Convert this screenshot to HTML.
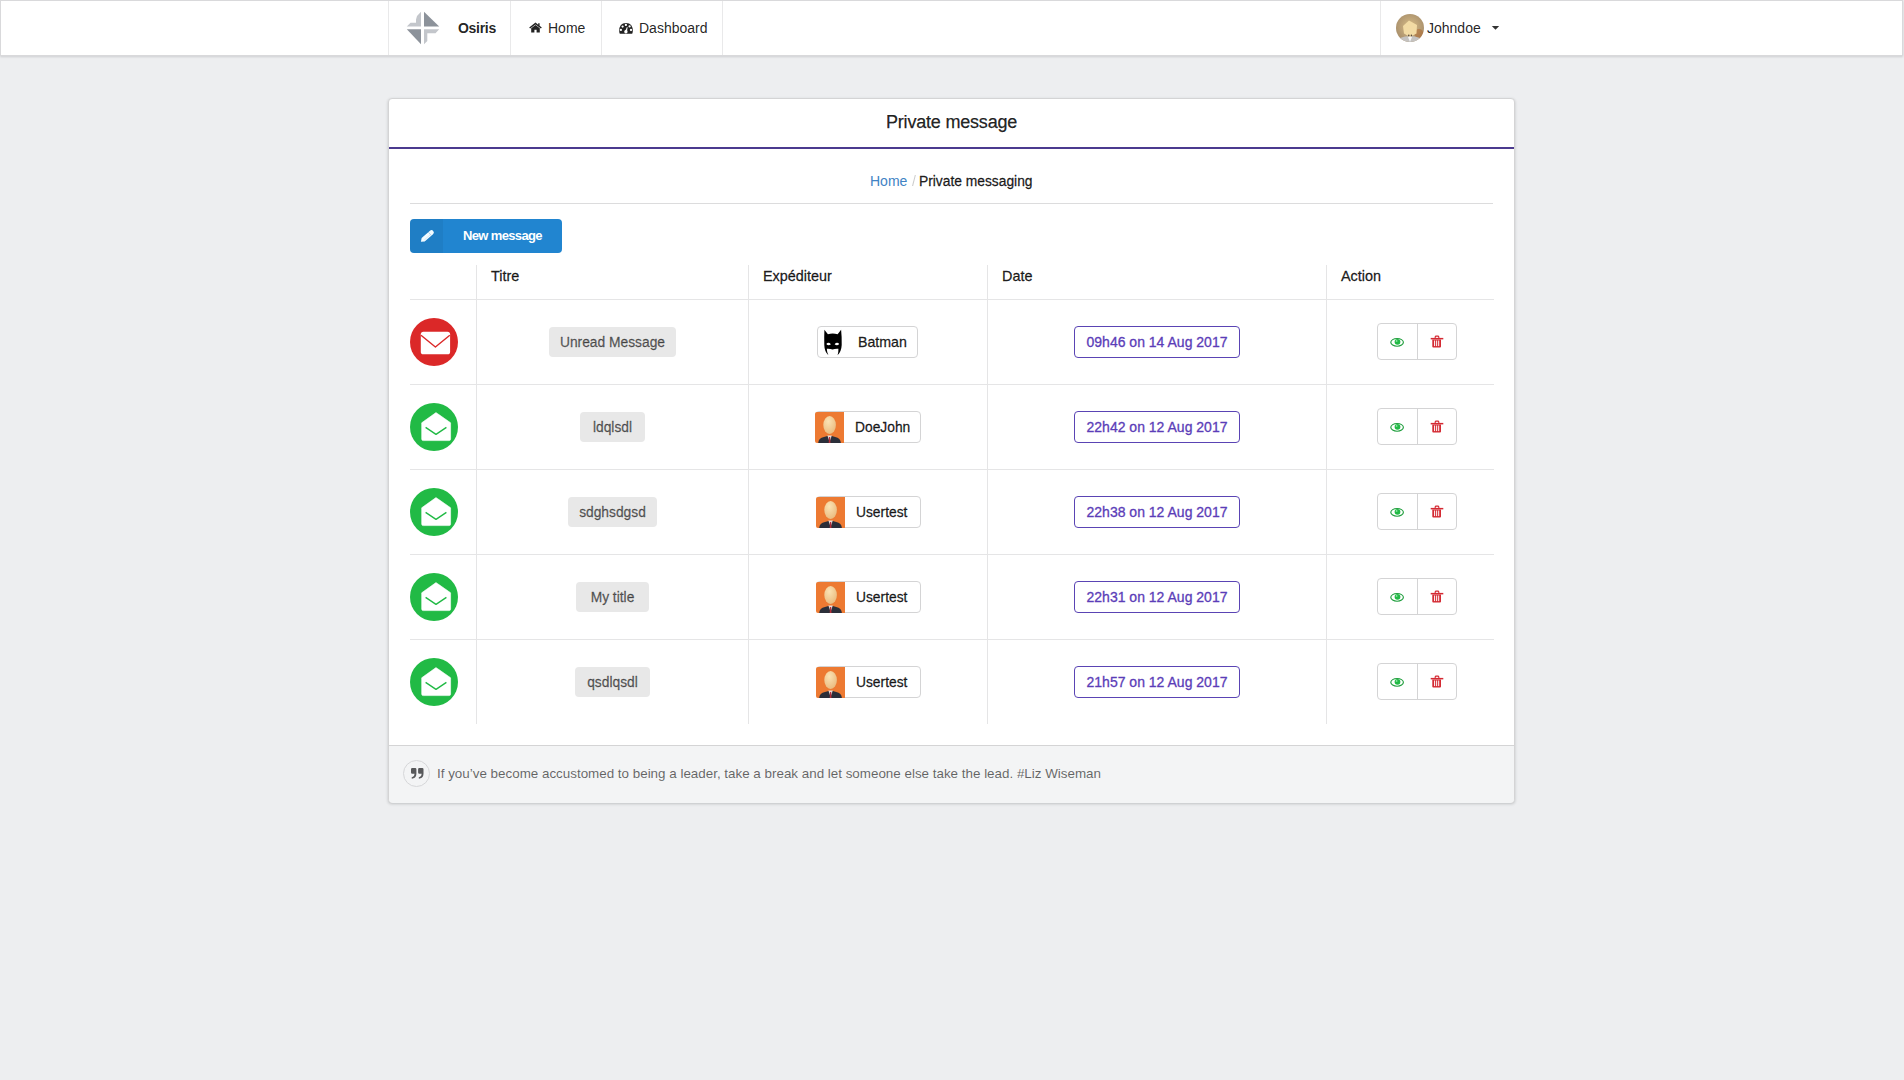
<!DOCTYPE html>
<html>
<head>
<meta charset="utf-8">
<style>
html,body{margin:0;padding:0;}
body{width:1904px;height:1080px;background:#edeef0;font-family:"Liberation Sans",sans-serif;color:rgba(0,0,0,.87);position:relative;overflow:hidden;}
.a{position:absolute;}
.sb{font-weight:normal !important;-webkit-text-stroke:0.3px currentColor;}
.t{position:absolute;white-space:nowrap;line-height:1;}
.nav{position:absolute;left:0;top:0;width:1903px;height:56px;box-sizing:border-box;background:#fff;border:1px solid #d9d9db;box-shadow:0 1px 2px rgba(34,36,38,.15);}
.vd{position:absolute;top:1px;width:1px;height:54px;background:#e9e9ea;}
.card{position:absolute;left:388px;top:98px;width:1127px;height:705px;box-sizing:border-box;background:#fff;border:1px solid #d4d4d5;border-radius:4px;box-shadow:0 1px 3px rgba(34,36,38,.22);overflow:hidden;}
.hl{position:absolute;height:1px;background:#e5e5e6;}
.vl{position:absolute;width:1px;background:#e5e5e6;}
.circ{position:absolute;width:48px;height:48px;border-radius:50%;}
.lbl{position:absolute;height:30px;background:#e8e8e8;border-radius:4px;color:rgba(0,0,0,.6);-webkit-text-stroke:0.3px currentColor;font-size:13.8px;line-height:32px;text-align:center;}
.slbl{position:absolute;height:32px;box-sizing:border-box;border:1px solid #d4d4d5;border-radius:4px;background:#fff;-webkit-text-stroke:0.3px currentColor;font-size:13.8px;line-height:30px;color:rgba(0,0,0,.87);}
.dlbl{position:absolute;left:1074px;width:166px;height:32px;box-sizing:border-box;border:1px solid #5a44b4;border-radius:4px;background:#fff;-webkit-text-stroke:0.3px currentColor;font-size:14px;line-height:30px;color:#5b3db8;text-align:center;}
.acts{position:absolute;left:1377px;width:80px;height:37px;box-sizing:border-box;border:1px solid #d4d4d5;border-radius:4px;background:#fff;}
</style>
</head>
<body>
<!-- NAVBAR -->
<div class="nav"></div>
<div class="vd" style="left:388px"></div>
<div class="vd" style="left:510px"></div>
<div class="vd" style="left:601px"></div>
<div class="vd" style="left:722px"></div>
<div class="vd" style="left:1380px"></div>

<svg class="a" style="left:406px;top:11px" width="34" height="34" viewBox="0 0 34 34">
<polygon points="18,0.7 18,15.5 33.2,15.5" fill="#8c929a"/>
<polygon points="0.8,18.3 15,18.3 15,33.2" fill="#8c929a"/>
<polygon points="15,0.8 15,15.5 0.8,15.5 4.5,11.8 10,11.8 10,8.5 11,5" fill="#c3c6cb"/>
<polygon points="18,18.3 33.2,18.3 29.5,22.3 21.3,22.3 21.3,30 18,33.2" fill="#c3c6cb"/>
</svg>
<div class="t" style="left:458px;top:21px;font-size:14px;font-weight:bold;letter-spacing:-0.3px">Osiris</div>
<svg class="a" style="left:529px;top:22px" width="13" height="11" viewBox="0 0 13 11">
<path d="M6.5 0.6 L0.2 5.6 L1.1 6.6 L6.5 2.4 L11.9 6.6 L12.8 5.6 L10.6 3.8 V1.2 H9.2 V2.7 Z" fill="#222"/>
<path d="M2.2 6.3 L6.5 2.9 L10.8 6.3 V10.6 H7.6 V7.8 H5.4 V10.6 H2.2 Z" fill="#222"/>
</svg>
<div class="t" style="left:548px;top:21px;font-size:14px">Home</div>
<svg class="a" style="left:619px;top:22px" width="15" height="12" viewBox="0 0 15 12"><path d="M0.2 9 Q0.2 0.9 7 0.9 Q13.8 0.9 13.8 9 Q13.8 10.6 13.2 11.8 H0.8 Q0.2 10.6 0.2 9 Z" fill="#222"/><circle cx="6.9" cy="2.9" r="1.15" fill="#fff"/><circle cx="3.6" cy="4.6" r="1.15" fill="#fff"/><circle cx="10.6" cy="4.4" r="1.15" fill="#fff"/><circle cx="1.9" cy="7.9" r="1.15" fill="#fff"/><circle cx="12" cy="8" r="1.15" fill="#fff"/><circle cx="6.9" cy="9.7" r="1.7" fill="#fff"/><path d="M6.0 9.4 L7.9 5.0 L8.6 5.2 L7.9 9.9 Z" fill="#fff"/></svg>
<div class="t" style="left:639px;top:21px;font-size:14px">Dashboard</div>
<svg class="a" style="left:1396px;top:14px" width="28" height="28" viewBox="0 0 28 28"><defs><clipPath id="avc"><circle cx="14" cy="14" r="14"/></clipPath><radialGradient id="avg" cx="0.5" cy="0.45" r="0.6"><stop offset="0" stop-color="#d8bd86"/><stop offset="1" stop-color="#a48b6a"/></radialGradient><filter id="avb" x="-20%" y="-20%" width="140%" height="140%"><feGaussianBlur stdDeviation="0.6"/></filter></defs><g clip-path="url(#avc)"><rect width="28" height="28" fill="url(#avg)"/><ellipse cx="23" cy="20" rx="4.5" ry="5" fill="#b06a33" opacity=".55" filter="url(#avb)"/><path d="M4 24 Q14 20 24 24 V28 H4 Z" fill="#c4c2c0" filter="url(#avb)"/><path d="M12 23 L14 28 L16 23 Z" fill="#f4f4f4"/><path d="M7 12 L13 6.5 L21 11 L20.5 19.5 L14 23 L8 19.5 Z" fill="#f2dba4" filter="url(#avb)"/><circle cx="12.8" cy="21.4" r="0.8" fill="#5a4a3a"/><circle cx="15.4" cy="21.4" r="0.8" fill="#5a4a3a"/></g></svg>
<div class="t" style="left:1427px;top:21px;font-size:14px">Johndoe</div>
<svg class="a" style="left:1491px;top:25px" width="9" height="6" viewBox="0 0 9 6"><polygon points="0.8,1 8.2,1 4.5,4.8" fill="#333"/></svg>

<!-- CARD -->
<div class="card"></div>
<div class="t" style="left:886px;top:113px;font-size:18px;letter-spacing:-0.2px;-webkit-text-stroke:0.25px currentColor">Private message</div>
<div class="a" style="left:389px;top:147px;width:1125px;height:2px;background:#4b3a8f"></div>
<div class="t" style="left:870px;top:173.5px;font-size:14px;color:#4183c4">Home</div>
<div class="t" style="left:912px;top:173.5px;font-size:14px;color:rgba(0,0,0,.4);opacity:.5">/</div>
<div class="t" style="left:919px;top:174.5px;font-size:13.8px;-webkit-text-stroke:0.3px currentColor">Private messaging</div>
<div class="hl" style="left:410px;top:203px;width:1083px;background:#dcdcdd"></div>
<!-- button -->
<div class="a" style="left:410px;top:219px;width:152px;height:34px;border-radius:4px;background:#2185d0;overflow:hidden">
<div class="a" style="left:0;top:0;width:33px;height:34px;background:rgba(0,0,0,.05)"></div>
<svg class="a" style="left:9px;top:10px" width="16" height="15" viewBox="0 0 16 15"><path d="M1.9 12.7 L5.68 12.45 L14.02 5.13 A2.3 2.3 0 0 0 10.98 1.67 L2.64 8.99 Z" fill="#f2fbff"/><path d="M12.37 6.58 L9.33 3.12" stroke="#2185d0" stroke-width="0.5" opacity=".6"/><path d="M5.3 10.9 L11.6 5.4" stroke="#9cc8ea" stroke-width="0.5" opacity=".7"/></svg>
</div>
<div class="t" style="left:463px;top:229px;font-size:13px;font-weight:bold;letter-spacing:-0.65px;color:#fff">New message</div>
<div class="t" style="left:491px;top:269px;font-size:14.4px;-webkit-text-stroke:0.3px currentColor">Titre</div>
<div class="t" style="left:763px;top:269px;font-size:14.4px;-webkit-text-stroke:0.3px currentColor">Expéditeur</div>
<div class="t" style="left:1002px;top:269px;font-size:14.4px;-webkit-text-stroke:0.3px currentColor">Date</div>
<div class="t" style="left:1341px;top:269px;font-size:14.4px;-webkit-text-stroke:0.3px currentColor">Action</div>
<div class="vl" style="left:476px;top:265px;height:459px"></div>
<div class="vl" style="left:748px;top:265px;height:459px"></div>
<div class="vl" style="left:987px;top:265px;height:459px"></div>
<div class="vl" style="left:1326px;top:265px;height:459px"></div>
<div class="hl" style="left:410px;top:299px;width:1084px"></div>
<div class="hl" style="left:410px;top:384px;width:1084px"></div>
<div class="hl" style="left:410px;top:469px;width:1084px"></div>
<div class="hl" style="left:410px;top:554px;width:1084px"></div>
<div class="hl" style="left:410px;top:639px;width:1084px"></div>
<svg class="a" style="left:410px;top:318px" width="48" height="48" viewBox="0 0 48 48"><circle cx="24" cy="24" r="24" fill="#db2828"/><rect x="10.8" y="13.7" width="29.3" height="22.6" rx="2.6" fill="#fff"/><path d="M11 17.2 L25.4 29 L39.8 17.2" stroke="#db2828" stroke-width="1.4" fill="none" stroke-linejoin="round"/></svg>
<div class="lbl" style="left:549px;top:327px;width:127px">Unread Message</div>
<div class="slbl" style="left:817px;top:326px;width:101px"><svg class="a" style="left:6px;top:2px" width="18" height="28" viewBox="0 0 18 28"><path d="M0.4 0.8 L3.9 5.2 Q8.6 3.6 13.6 5.2 L17.1 0.8 Q17.9 8 17.7 16 Q17.4 22.5 13.6 26.3 Q14.6 22 14.4 19.7 Q11 19.4 8.6 20.6 Q6.2 19.4 2.8 19.7 Q2.8 22.5 4.4 26.3 Q0.4 22.5 0.3 16 Q0.1 8 0.4 0.8 Z" fill="#000"/><path d="M2.3 15.0 Q4.4 12.4 6.9 15.2 Q4.4 17.6 2.3 15.0 Z M15.2 15.0 Q13.1 12.4 10.6 15.2 Q13.1 17.6 15.2 15.0 Z" fill="#fff"/></svg><span class="a" style="left:40px;top:0px;font-size:14.2px">Batman</span></div>
<div class="dlbl" style="top:326px">09h46 on 14 Aug 2017</div>
<div class="acts" style="top:323px"><div class="a" style="left:39px;top:0;width:1px;height:35px;background:#d4d4d5"></div><svg class="a" style="left:11px;top:12px" width="16" height="12" viewBox="0 0 16 12"><ellipse cx="8.1" cy="6.35" rx="6.3" ry="3.85" fill="none" stroke="#1f9e3d" stroke-width="1.15"/><circle cx="8.5" cy="5.8" r="2.9" fill="#21ba45"/><circle cx="7.6" cy="4.9" r="0.9" fill="#8fe3a6"/></svg><svg class="a" style="left:52px;top:11px" width="14" height="14" viewBox="0 0 14 14"><path d="M5.2 3.3 V2 Q5.2 1.1 6.2 1.1 H7.8 Q8.8 1.1 8.8 2 V3.3" stroke="#d42a33" stroke-width="1.1" fill="none"/><rect x="0.7" y="2.9" width="12.6" height="1.5" fill="#d42a33"/><path d="M2.3 4.4 H11 V11.6 Q11 12.6 10 12.6 H3.3 Q2.3 12.6 2.3 11.6 Z" fill="#d42a33"/><rect x="4.1" y="5.5" width="1" height="5.6" fill="#fff"/><rect x="6.15" y="5.5" width="1" height="5.6" fill="#fff"/><rect x="8.2" y="5.5" width="1" height="5.6" fill="#fff"/></svg></div>
<svg class="a" style="left:410px;top:403px" width="48" height="48" viewBox="0 0 48 48"><circle cx="24" cy="24" r="24" fill="#21ba45"/><path d="M26 9.6 Q26.1 9.6 40.6 19.8 V36 Q40.6 37.6 39 37.6 H13.3 Q11.7 37.6 11.7 36 V19.8 Z" fill="#fff" stroke="#fff" stroke-width="0.6" stroke-linejoin="round"/><path d="M15.6 24.4 L26 31.4 L36.4 24.4" stroke="#21ba45" stroke-width="1.4" fill="none" stroke-linejoin="round"/></svg>
<div class="lbl" style="left:580px;top:412px;width:65px">ldqlsdl</div>
<div class="slbl" style="left:815px;top:411px;width:106px"><svg class="a" style="left:-1px;top:0px" width="29" height="31" viewBox="0 0 29 31"><defs><radialGradient id="hg" cx="0.4" cy="0.3" r="0.8"><stop offset="0" stop-color="#fbe3b4"/><stop offset="1" stop-color="#e8b77a"/></radialGradient></defs><path d="M2 0 H29 V31 H2 Q0 31 0 29 V2 Q0 0 2 0 Z" fill="#ed7a32"/><ellipse cx="14.6" cy="13" rx="6.3" ry="9" fill="url(#hg)"/><path d="M3.2 31 Q3.5 26 9 25 L12.5 24 H16.8 L20.2 25 Q25.6 26 25.9 31 Z" fill="#2b2f3a"/><path d="M12.4 23.6 L14.6 30 L16.8 23.6 Z" fill="#e9dcd8"/><path d="M14 25 H15.2 L15.5 31 H13.7 Z" fill="#b5303a"/></svg><span class="a" style="left:39px;top:0.5px">DoeJohn</span></div>
<div class="dlbl" style="top:411px">22h42 on 12 Aug 2017</div>
<div class="acts" style="top:408px"><div class="a" style="left:39px;top:0;width:1px;height:35px;background:#d4d4d5"></div><svg class="a" style="left:11px;top:12px" width="16" height="12" viewBox="0 0 16 12"><ellipse cx="8.1" cy="6.35" rx="6.3" ry="3.85" fill="none" stroke="#1f9e3d" stroke-width="1.15"/><circle cx="8.5" cy="5.8" r="2.9" fill="#21ba45"/><circle cx="7.6" cy="4.9" r="0.9" fill="#8fe3a6"/></svg><svg class="a" style="left:52px;top:11px" width="14" height="14" viewBox="0 0 14 14"><path d="M5.2 3.3 V2 Q5.2 1.1 6.2 1.1 H7.8 Q8.8 1.1 8.8 2 V3.3" stroke="#d42a33" stroke-width="1.1" fill="none"/><rect x="0.7" y="2.9" width="12.6" height="1.5" fill="#d42a33"/><path d="M2.3 4.4 H11 V11.6 Q11 12.6 10 12.6 H3.3 Q2.3 12.6 2.3 11.6 Z" fill="#d42a33"/><rect x="4.1" y="5.5" width="1" height="5.6" fill="#fff"/><rect x="6.15" y="5.5" width="1" height="5.6" fill="#fff"/><rect x="8.2" y="5.5" width="1" height="5.6" fill="#fff"/></svg></div>
<svg class="a" style="left:410px;top:488px" width="48" height="48" viewBox="0 0 48 48"><circle cx="24" cy="24" r="24" fill="#21ba45"/><path d="M26 9.6 Q26.1 9.6 40.6 19.8 V36 Q40.6 37.6 39 37.6 H13.3 Q11.7 37.6 11.7 36 V19.8 Z" fill="#fff" stroke="#fff" stroke-width="0.6" stroke-linejoin="round"/><path d="M15.6 24.4 L26 31.4 L36.4 24.4" stroke="#21ba45" stroke-width="1.4" fill="none" stroke-linejoin="round"/></svg>
<div class="lbl" style="left:568px;top:497px;width:89px">sdghsdgsd</div>
<div class="slbl" style="left:816px;top:496px;width:105px"><svg class="a" style="left:-1px;top:0px" width="29" height="31" viewBox="0 0 29 31"><defs><radialGradient id="hg" cx="0.4" cy="0.3" r="0.8"><stop offset="0" stop-color="#fbe3b4"/><stop offset="1" stop-color="#e8b77a"/></radialGradient></defs><path d="M2 0 H29 V31 H2 Q0 31 0 29 V2 Q0 0 2 0 Z" fill="#ed7a32"/><ellipse cx="14.6" cy="13" rx="6.3" ry="9" fill="url(#hg)"/><path d="M3.2 31 Q3.5 26 9 25 L12.5 24 H16.8 L20.2 25 Q25.6 26 25.9 31 Z" fill="#2b2f3a"/><path d="M12.4 23.6 L14.6 30 L16.8 23.6 Z" fill="#e9dcd8"/><path d="M14 25 H15.2 L15.5 31 H13.7 Z" fill="#b5303a"/></svg><span class="a" style="left:39px;top:0.5px">Usertest</span></div>
<div class="dlbl" style="top:496px">22h38 on 12 Aug 2017</div>
<div class="acts" style="top:493px"><div class="a" style="left:39px;top:0;width:1px;height:35px;background:#d4d4d5"></div><svg class="a" style="left:11px;top:12px" width="16" height="12" viewBox="0 0 16 12"><ellipse cx="8.1" cy="6.35" rx="6.3" ry="3.85" fill="none" stroke="#1f9e3d" stroke-width="1.15"/><circle cx="8.5" cy="5.8" r="2.9" fill="#21ba45"/><circle cx="7.6" cy="4.9" r="0.9" fill="#8fe3a6"/></svg><svg class="a" style="left:52px;top:11px" width="14" height="14" viewBox="0 0 14 14"><path d="M5.2 3.3 V2 Q5.2 1.1 6.2 1.1 H7.8 Q8.8 1.1 8.8 2 V3.3" stroke="#d42a33" stroke-width="1.1" fill="none"/><rect x="0.7" y="2.9" width="12.6" height="1.5" fill="#d42a33"/><path d="M2.3 4.4 H11 V11.6 Q11 12.6 10 12.6 H3.3 Q2.3 12.6 2.3 11.6 Z" fill="#d42a33"/><rect x="4.1" y="5.5" width="1" height="5.6" fill="#fff"/><rect x="6.15" y="5.5" width="1" height="5.6" fill="#fff"/><rect x="8.2" y="5.5" width="1" height="5.6" fill="#fff"/></svg></div>
<svg class="a" style="left:410px;top:573px" width="48" height="48" viewBox="0 0 48 48"><circle cx="24" cy="24" r="24" fill="#21ba45"/><path d="M26 9.6 Q26.1 9.6 40.6 19.8 V36 Q40.6 37.6 39 37.6 H13.3 Q11.7 37.6 11.7 36 V19.8 Z" fill="#fff" stroke="#fff" stroke-width="0.6" stroke-linejoin="round"/><path d="M15.6 24.4 L26 31.4 L36.4 24.4" stroke="#21ba45" stroke-width="1.4" fill="none" stroke-linejoin="round"/></svg>
<div class="lbl" style="left:576px;top:582px;width:73px">My title</div>
<div class="slbl" style="left:816px;top:581px;width:105px"><svg class="a" style="left:-1px;top:0px" width="29" height="31" viewBox="0 0 29 31"><defs><radialGradient id="hg" cx="0.4" cy="0.3" r="0.8"><stop offset="0" stop-color="#fbe3b4"/><stop offset="1" stop-color="#e8b77a"/></radialGradient></defs><path d="M2 0 H29 V31 H2 Q0 31 0 29 V2 Q0 0 2 0 Z" fill="#ed7a32"/><ellipse cx="14.6" cy="13" rx="6.3" ry="9" fill="url(#hg)"/><path d="M3.2 31 Q3.5 26 9 25 L12.5 24 H16.8 L20.2 25 Q25.6 26 25.9 31 Z" fill="#2b2f3a"/><path d="M12.4 23.6 L14.6 30 L16.8 23.6 Z" fill="#e9dcd8"/><path d="M14 25 H15.2 L15.5 31 H13.7 Z" fill="#b5303a"/></svg><span class="a" style="left:39px;top:0.5px">Usertest</span></div>
<div class="dlbl" style="top:581px">22h31 on 12 Aug 2017</div>
<div class="acts" style="top:578px"><div class="a" style="left:39px;top:0;width:1px;height:35px;background:#d4d4d5"></div><svg class="a" style="left:11px;top:12px" width="16" height="12" viewBox="0 0 16 12"><ellipse cx="8.1" cy="6.35" rx="6.3" ry="3.85" fill="none" stroke="#1f9e3d" stroke-width="1.15"/><circle cx="8.5" cy="5.8" r="2.9" fill="#21ba45"/><circle cx="7.6" cy="4.9" r="0.9" fill="#8fe3a6"/></svg><svg class="a" style="left:52px;top:11px" width="14" height="14" viewBox="0 0 14 14"><path d="M5.2 3.3 V2 Q5.2 1.1 6.2 1.1 H7.8 Q8.8 1.1 8.8 2 V3.3" stroke="#d42a33" stroke-width="1.1" fill="none"/><rect x="0.7" y="2.9" width="12.6" height="1.5" fill="#d42a33"/><path d="M2.3 4.4 H11 V11.6 Q11 12.6 10 12.6 H3.3 Q2.3 12.6 2.3 11.6 Z" fill="#d42a33"/><rect x="4.1" y="5.5" width="1" height="5.6" fill="#fff"/><rect x="6.15" y="5.5" width="1" height="5.6" fill="#fff"/><rect x="8.2" y="5.5" width="1" height="5.6" fill="#fff"/></svg></div>
<svg class="a" style="left:410px;top:658px" width="48" height="48" viewBox="0 0 48 48"><circle cx="24" cy="24" r="24" fill="#21ba45"/><path d="M26 9.6 Q26.1 9.6 40.6 19.8 V36 Q40.6 37.6 39 37.6 H13.3 Q11.7 37.6 11.7 36 V19.8 Z" fill="#fff" stroke="#fff" stroke-width="0.6" stroke-linejoin="round"/><path d="M15.6 24.4 L26 31.4 L36.4 24.4" stroke="#21ba45" stroke-width="1.4" fill="none" stroke-linejoin="round"/></svg>
<div class="lbl" style="left:575px;top:667px;width:75px">qsdlqsdl</div>
<div class="slbl" style="left:816px;top:666px;width:105px"><svg class="a" style="left:-1px;top:0px" width="29" height="31" viewBox="0 0 29 31"><defs><radialGradient id="hg" cx="0.4" cy="0.3" r="0.8"><stop offset="0" stop-color="#fbe3b4"/><stop offset="1" stop-color="#e8b77a"/></radialGradient></defs><path d="M2 0 H29 V31 H2 Q0 31 0 29 V2 Q0 0 2 0 Z" fill="#ed7a32"/><ellipse cx="14.6" cy="13" rx="6.3" ry="9" fill="url(#hg)"/><path d="M3.2 31 Q3.5 26 9 25 L12.5 24 H16.8 L20.2 25 Q25.6 26 25.9 31 Z" fill="#2b2f3a"/><path d="M12.4 23.6 L14.6 30 L16.8 23.6 Z" fill="#e9dcd8"/><path d="M14 25 H15.2 L15.5 31 H13.7 Z" fill="#b5303a"/></svg><span class="a" style="left:39px;top:0.5px">Usertest</span></div>
<div class="dlbl" style="top:666px">21h57 on 12 Aug 2017</div>
<div class="acts" style="top:663px"><div class="a" style="left:39px;top:0;width:1px;height:35px;background:#d4d4d5"></div><svg class="a" style="left:11px;top:12px" width="16" height="12" viewBox="0 0 16 12"><ellipse cx="8.1" cy="6.35" rx="6.3" ry="3.85" fill="none" stroke="#1f9e3d" stroke-width="1.15"/><circle cx="8.5" cy="5.8" r="2.9" fill="#21ba45"/><circle cx="7.6" cy="4.9" r="0.9" fill="#8fe3a6"/></svg><svg class="a" style="left:52px;top:11px" width="14" height="14" viewBox="0 0 14 14"><path d="M5.2 3.3 V2 Q5.2 1.1 6.2 1.1 H7.8 Q8.8 1.1 8.8 2 V3.3" stroke="#d42a33" stroke-width="1.1" fill="none"/><rect x="0.7" y="2.9" width="12.6" height="1.5" fill="#d42a33"/><path d="M2.3 4.4 H11 V11.6 Q11 12.6 10 12.6 H3.3 Q2.3 12.6 2.3 11.6 Z" fill="#d42a33"/><rect x="4.1" y="5.5" width="1" height="5.6" fill="#fff"/><rect x="6.15" y="5.5" width="1" height="5.6" fill="#fff"/><rect x="8.2" y="5.5" width="1" height="5.6" fill="#fff"/></svg></div>
<div class="a" style="left:389px;top:745px;width:1125px;height:57px;background:#f3f4f5;border-top:1px solid #d4d4d5;border-radius:0 0 4px 4px"></div>
<div class="a" style="left:403px;top:760px;width:25px;height:25px;border-radius:50%;border:1.5px solid #d6d7d9;background:#f3f4f5"></div>
<svg class="a" style="left:410px;top:767px" width="15" height="13" viewBox="0 0 15 13"><path d="M2.2 1 H5.2 Q6.4 1 6.4 2.2 V6.8 Q6.4 10.9 2.6 11.6 Q1.6 11.8 1.6 10.9 Q1.6 10.2 2.4 10 Q4.5 9.3 4.6 6.7 H2.2 Q1 6.7 1 5.5 V2.2 Q1 1 2.2 1 Z" fill="#58595b"/><path d="M2.2 1 H5.2 Q6.4 1 6.4 2.2 V6.8 Q6.4 10.9 2.6 11.6 Q1.6 11.8 1.6 10.9 Q1.6 10.2 2.4 10 Q4.5 9.3 4.6 6.7 H2.2 Q1 6.7 1 5.5 V2.2 Q1 1 2.2 1 Z" transform="translate(7.1 0)" fill="#58595b"/></svg>
<div class="t" style="left:437px;top:767px;font-size:13.4px;color:rgba(0,0,0,.6)">If you’ve become accustomed to being a leader, take a break and let someone else take the lead. #Liz Wiseman</div>
</body>
</html>
